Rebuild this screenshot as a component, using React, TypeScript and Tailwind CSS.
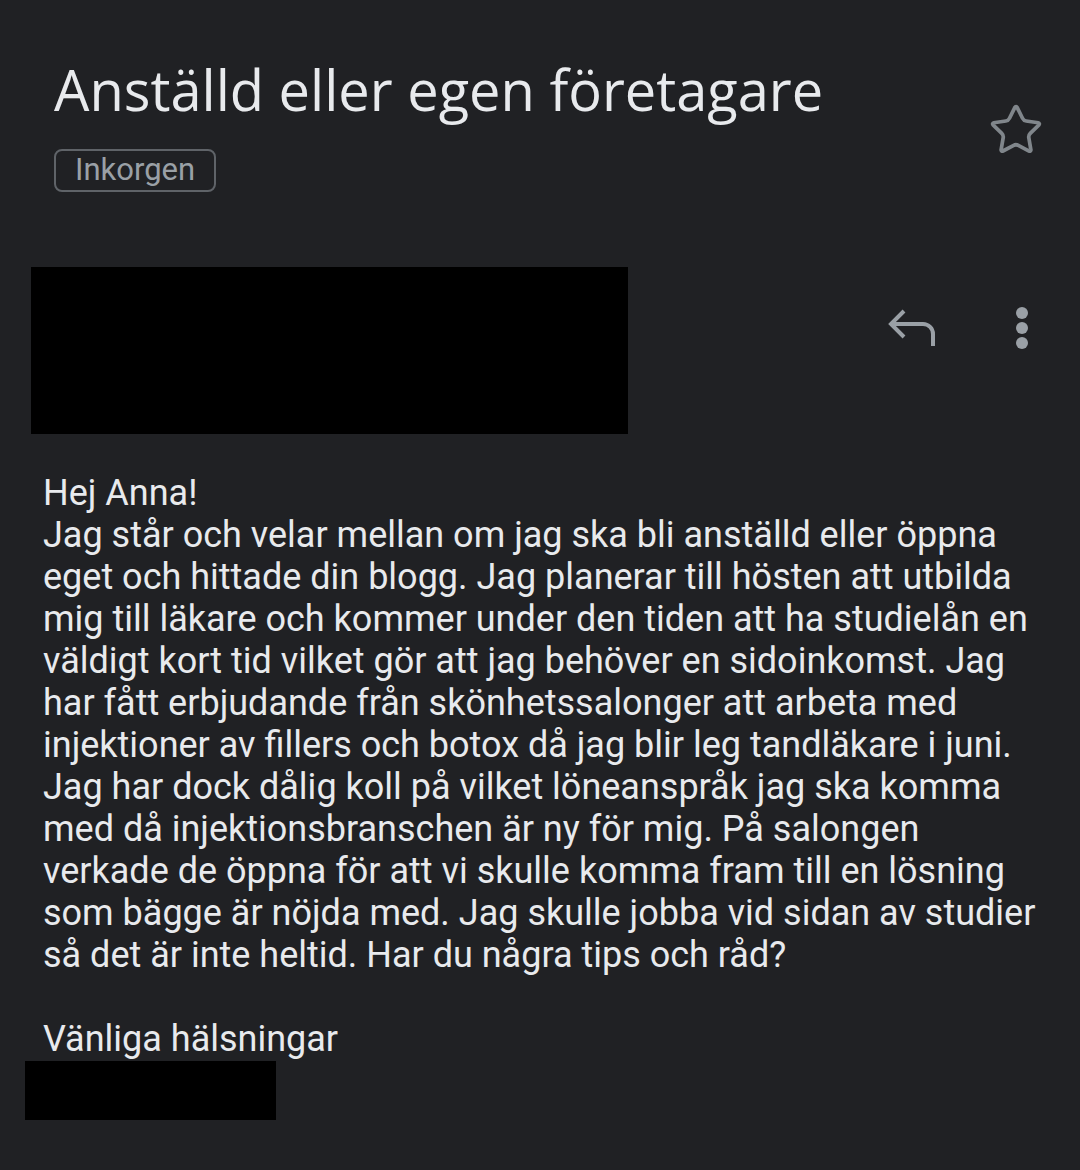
import { Star } from "lucide-react";

const lines = [
  "Hej Anna!",
  "Jag står och velar mellan om jag ska bli anställd eller öppna",
  "eget och hittade din blogg. Jag planerar till hösten att utbilda",
  "mig till läkare och kommer under den tiden att ha studielån en",
  "väldigt kort tid vilket gör att jag behöver en sidoinkomst. Jag",
  "har fått erbjudande från skönhetssalonger att arbeta med",
  "injektioner av fillers och botox då jag blir leg tandläkare i juni.",
  "Jag har dock dålig koll på vilket löneanspråk jag ska komma",
  "med då injektionsbranschen är ny för mig. På salongen",
  "verkade de öppna för att vi skulle komma fram till en lösning",
  "som bägge är nöjda med. Jag skulle jobba vid sidan av studier",
  "så det är inte heltid. Har du några tips och råd?",
];

function ReplyIcon() {
  return (
    <svg width="50" height="40" viewBox="0 0 50 40" fill="none" stroke="#9aa0a6" strokeWidth="4">
      <path d="M17 3L4 16l13 13" strokeLinejoin="miter" />
      <path d="M4 16h32a10 10 0 0 1 10 10v12" />
    </svg>
  );
}

export default function App() {
  return (
    <div className="w-[1080px] h-[1170px] bg-[#202124] overflow-hidden font-['Roboto',sans-serif]">
      {/* header */}
      <div className="flex justify-between pl-[54px] pr-[36px] pt-[56px]">
        <div className="flex flex-col items-start">
          <h1 className="text-[56px] leading-[66px] text-[#e8eaed] font-normal font-['Open_Sans',sans-serif]">
            Anställd eller egen företagare
          </h1>
          <span className="mt-[27px] border-2 border-[#5f6368] rounded-[8px] px-[19px] h-[43px] flex items-center text-[31px] text-[#9aa0a6]">
            Inkorgen
          </span>
        </div>
        <Star className="mt-[46px] w-[56px] h-[56px] text-[#80868b]" strokeWidth={1.6} />
      </div>

      {/* sender row */}
      <div className="flex items-start justify-between mt-[75px] pl-[31px] pr-[52px]">
        <div className="w-[597px] h-[167px] bg-black" />
        <div className="flex items-center gap-[79px] mt-[40px]">
          <ReplyIcon />
          <div className="flex flex-col gap-[3px]">
            <span className="w-[12px] h-[12px] rounded-full bg-[#9aa0a6]" />
            <span className="w-[12px] h-[12px] rounded-full bg-[#9aa0a6]" />
            <span className="w-[12px] h-[12px] rounded-full bg-[#9aa0a6]" />
          </div>
        </div>
      </div>

      {/* body */}
      <div className="mt-[38px] pl-[43px] text-[36px] leading-[42px] text-[#e8eaed]">
        {lines.map((l, i) => (
          <div key={i} className="whitespace-nowrap">{l}</div>
        ))}
        <div className="h-[42px]" />
        <div>Vänliga hälsningar</div>
      </div>
      <div className="ml-[25px] mt-[1px] w-[251px] h-[59px] bg-black" />
    </div>
  );
}
